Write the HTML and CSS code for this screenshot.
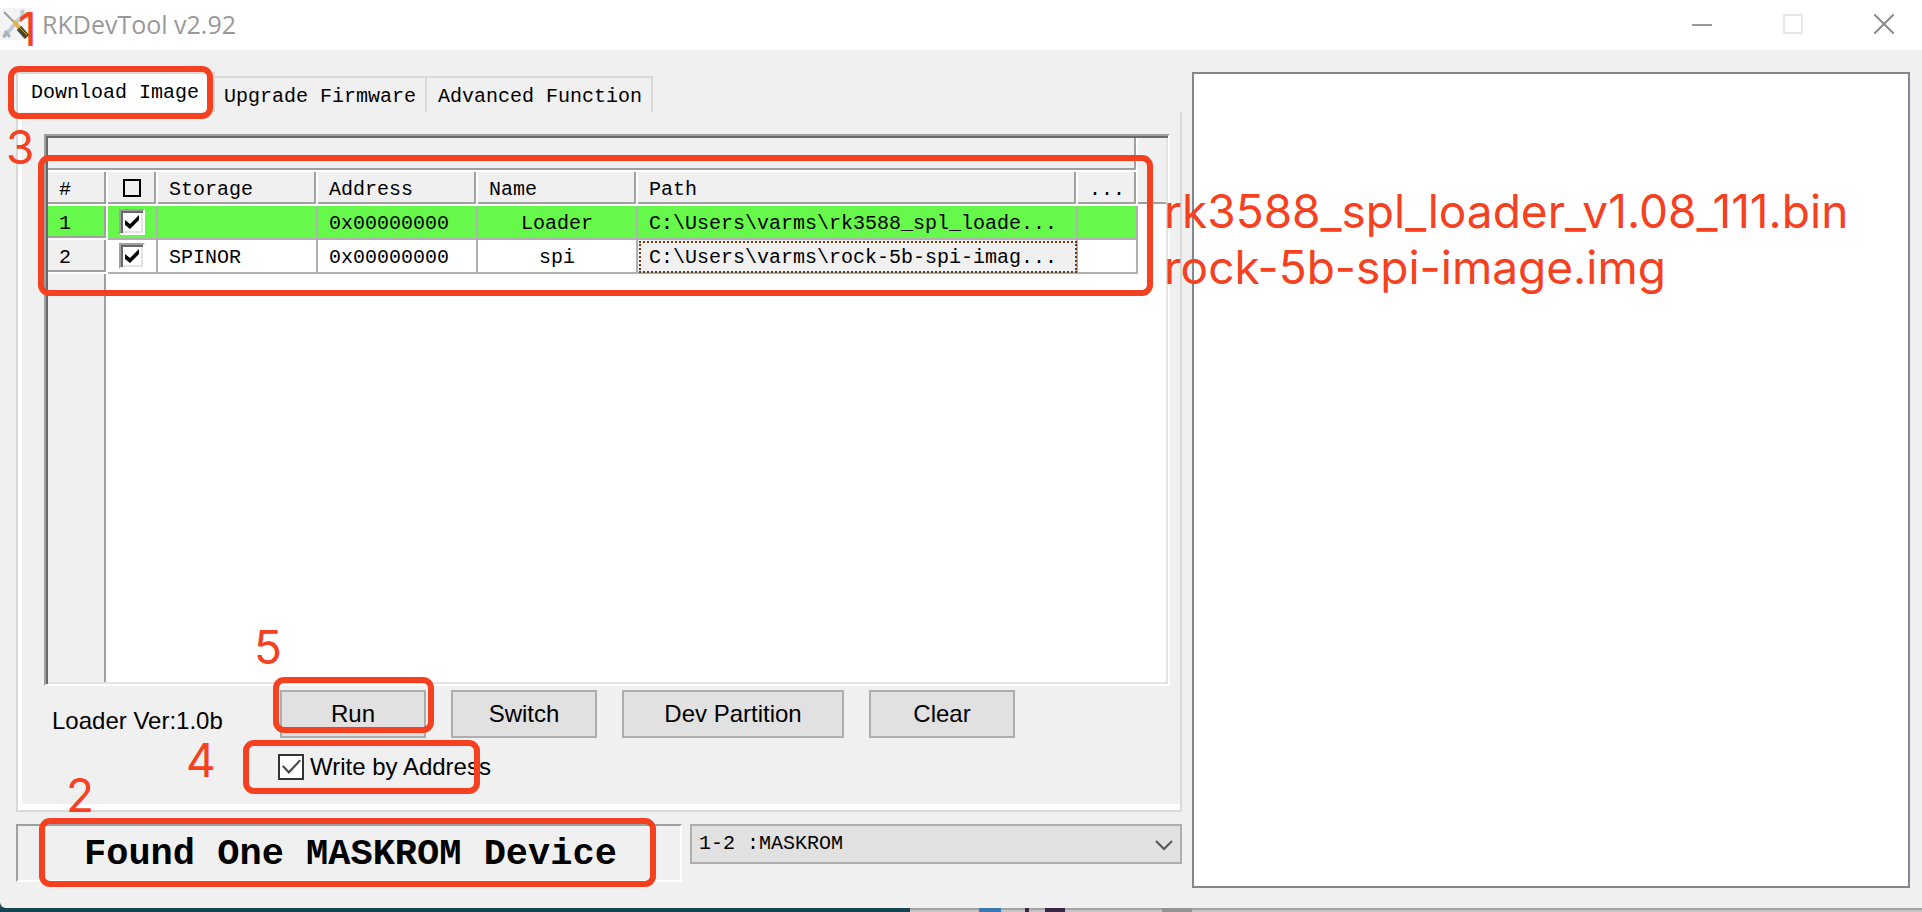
FILE: index.html
```html
<!DOCTYPE html>
<html lang="en">
<head>
  <meta charset="UTF-8" />
  <meta name="viewport" content="width=device-width, initial-scale=1" />
  <title>RKDevTool v2.92</title>
  <link rel="stylesheet" href="styles.css">
</head>
<body>

  <div class="window">
    <header class="titlebar">
      <svg class="app-icon" viewBox="0 0 32 32" aria-hidden="true">
        <rect width="32" height="32" fill="#f3f4f5" />
        <path d="M4 28 L9 23 L23 7 L22 2 M23 7 L29 9" fill="none" stroke="#c3cbd1" stroke-width="4" />
        <path d="M3 29 L8 25 M5 23 L10 29" stroke="#aab3ba" stroke-width="3" />
        <path d="M4 4 L15 15" stroke="#9b9b98" stroke-width="2" />
        <path d="M14 13 L20 21" stroke="#e0b84a" stroke-width="4" />
        <path d="M19 20 L27 29" stroke="#4b4630" stroke-width="6" />
        <path d="M20 20 L27 27" stroke="#c9a53c" stroke-width="1" />
      </svg>
      <h1>RKDevTool v2.92</h1>
      <div class="window-controls">
        <button aria-label="Minimize"><svg viewBox="0 0 20 20"><path d="M0 11H20" stroke="#999" stroke-width="2" /></svg></button>
        <button aria-label="Maximize" disabled><svg viewBox="0 0 20 20"><path d="M1 1H19V19H1Z" fill="none" stroke="#e8e8e8" stroke-width="2" /></svg></button>
        <button aria-label="Close"><svg viewBox="0 0 20 20"><path d="M0 0L20 20M20 0L0 20" stroke="#8c8c8c" stroke-width="2" /></svg></button>
      </div>
      <span class="note step-1">1</span>
    </header>

    <main class="client">
      <section class="tool">
        <nav class="tabs">
          <button class="tab active">Download Image</button>
          <button class="tab">Upgrade Firmware</button>
          <button class="tab">Advanced Function</button>
          <span class="mark mark-tab"></span>
          <span class="note step-3">3</span>
        </nav>

        <div class="panel">
          <div class="grid">
            <table>
              <colgroup>
                <col class="col-num"><col class="col-check"><col class="col-mid"><col class="col-mid"><col class="col-mid"><col><col class="col-more"><col class="col-rest">
              </colgroup>
              <thead>
                <tr>
                  <td class="band" colspan="7"></td>
                  <td class="rest" rowspan="2"></td>
                </tr>
                <tr>
                  <th>#</th>
                  <th class="check"><input type="checkbox" class="check-all" aria-label="Select all"></th>
                  <th>Storage</th>
                  <th>Address</th>
                  <th>Name</th>
                  <th>Path</th>
                  <th>...</th>
                </tr>
              </thead>
              <tbody>
                <tr class="ok">
                  <th>1</th>
                  <td class="check"><input type="checkbox" class="check-row" aria-label="Row 1" checked></td>
                  <td></td>
                  <td>0x00000000</td>
                  <td class="name">Loader</td>
                  <td>C:\Users\varms\rk3588_spl_loade...</td>
                  <td></td>
                </tr>
                <tr>
                  <th>2</th>
                  <td class="check"><input type="checkbox" class="check-row" aria-label="Row 2" checked></td>
                  <td>SPINOR</td>
                  <td>0x00000000</td>
                  <td class="name">spi</td>
                  <td class="focused">C:\Users\varms\rock-5b-spi-imag...</td>
                  <td></td>
                </tr>
              </tbody>
            </table>
            <span class="mark mark-table"></span>
          </div>

          <div class="actions">
            <span class="loader">Loader Ver:1.0b</span>
            <div class="buttons">
              <button class="btn">Run</button>
              <button class="btn">Switch</button>
              <button class="btn wide">Dev Partition</button>
              <button class="btn">Clear</button>
              <span class="mark mark-run"></span>
              <span class="note step-5">5</span>
            </div>
          </div>

          <div class="option">
            <input type="checkbox" id="byAddress" checked>
            <label for="byAddress">Write by Address</label>
            <span class="mark mark-option"></span>
            <span class="note step-4">4</span>
          </div>
        </div>

        <div class="footer">
          <div class="status">
            Found One MASKROM Device
            <span class="mark mark-status"></span>
            <span class="note step-2">2</span>
          </div>
          <div class="device">
            <select aria-label="Device">
              <option>1-2 :MASKROM</option>
            </select>
            <svg viewBox="0 0 18 12" aria-hidden="true"><path d="M1 2L9 10L17 2" fill="none" stroke="#555" stroke-width="2" /></svg>
          </div>
        </div>
      </section>

      <section class="log">
        <p class="note files">rk3588_spl_loader_v1.08_111.bin<br>rock-5b-spi-image.img</p>
      </section>
    </main>
  </div>

  <!-- sliver of the desktop under the window -->
  <div class="desktop">
    <span class="wallpaper"></span>
    <span class="taskbar"><i class="blue"></i><i class="dark"></i><i class="dark big"></i><i class="thumb"></i></span>
  </div>

</body>
</html>
```

FILE: styles.css
```css
* {
  box-sizing: border-box;
}

body {
  margin: 0;
  min-height: 100vh;
  display: flex;
  flex-direction: column;
  background: #1d4c58;
  color: #000;
  font-family: "Liberation Mono", monospace;
  font-size: 20px;
  line-height: 24px;
}

button, select {
  margin: 0;
  padding: 0;
  font: inherit;
  color: inherit;
}

.window {
  flex: 1;
  display: flex;
  flex-direction: column;
  background: #f0f0f0;
  border-bottom-left-radius: 6px;
}

/* title bar */
.titlebar {
  position: relative;
  display: flex;
  align-items: center;
  height: 50px;
  padding-bottom: 2px;
  background: #fff;
}

.app-icon {
  width: 32px;
  height: 32px;
}

.titlebar h1 {
  margin: 0 0 0 10px;
  font-family: "Open Sans", sans-serif;
  font-size: 25px;
  font-weight: 400;
  color: #999;
}

.window-controls {
  display: flex;
  gap: 71px;
  margin-left: auto;
  padding-right: 28px;
}

.window-controls button {
  display: flex;
  border: none;
  background: none;
}

.window-controls svg {
  width: 20px;
  height: 20px;
}

/* client area */
.client {
  flex: 1;
  display: grid;
  grid-template-columns: 1166fr 718fr;
  gap: 10px;
  padding: 22px 12px 20px 16px;
}

.tool {
  display: flex;
  flex-direction: column;
  min-width: 0;
}

.tabs {
  position: relative;
  display: flex;
  align-items: flex-end;
  height: 40px;
}

.tab {
  height: 36px;
  padding: 4px 9px 0;
  border: 2px solid #d9d9d9;
  border-left: none;
  border-bottom: none;
  background: #f0f0f0;
  white-space: nowrap;
}

.tab + .tab + .tab {
  padding-left: 11px;
}

.tab.active {
  height: 40px;
  padding: 0 14px 0 13px;
  border-left: 2px solid #d9d9d9;
  background: #fff;
}

.panel {
  flex: 1;
  display: flex;
  flex-direction: column;
  padding: 22px 10px 30px 26px;
  border: 2px solid #d9d9d9;
  border-top: none;
  box-shadow: inset 4px -6px 0 #fff;
}

/* partition grid */
.grid {
  position: relative;
  flex: 1;
  border: 2px solid;
  border-color: #a0a0a0 #fff #fff #a0a0a0;
  background: linear-gradient(90deg, #f0f0f0 58px, #a0a0a0 58px, #a0a0a0 60px, #fff 60px);
  box-shadow: inset 2px 2px 0 #696969, inset -2px -2px 0 #e3e3e3;
}

.grid table {
  width: calc(100% - 4px);
  margin: 2px;
  table-layout: fixed;
  border-collapse: separate;
  border-spacing: 0;
}

.col-num { width: 60px; }
.col-check { width: 50px; }
.col-mid { width: 160px; }
.col-more { width: 60px; }
.col-rest { width: 28px; }

.grid th,
.grid td {
  height: 34px;
  padding: 3px 0 0 11px;
  border-right: 2px solid #b0b0b0;
  border-bottom: 2px solid #b0b0b0;
  font-weight: 400;
  text-align: left;
  white-space: nowrap;
  overflow: hidden;
}

.grid th,
.grid .band {
  border-color: #fff;
  background: #f0f0f0;
  box-shadow: inset -2px -2px 0 #a0a0a0;
}

.grid .rest {
  border-right: none;
  border-color: #fff;
  background: #f0f0f0;
  box-shadow: inset 0 -2px 0 #a0a0a0;
}

.grid .check {
  padding: 0;
  text-align: center;
}

.grid .name {
  padding-left: 0;
  text-align: center;
}

.grid .ok th,
.grid .ok td {
  background: #66f94b;
}

.grid .focused {
  background: #f0f0f0;
  outline: 2px dotted #6b3d12;
  outline-offset: -3px;
}

input[type="checkbox"] {
  appearance: none;
  position: relative;
  display: block;
  margin: 0;
  background: #fff;
}

.grid .check-all {
  width: 18px;
  height: 18px;
  margin: 0 auto;
  border: 2px solid #000;
  background: none;
}

.grid .check-row {
  width: 26px;
  height: 26px;
  margin: 0 auto;
  border: 2px solid;
  border-color: #a0a0a0 #fff #fff #a0a0a0;
  box-shadow: inset 2px 2px 0 #696969, inset -2px -2px 0 #e3e3e3;
}

.check-row:checked::before {
  content: "";
  position: absolute;
  inset: 4px;
  background: #000;
  clip-path: polygon(0 36%, 36% 64%, 100% 0, 100% 36%, 36% 100%, 0 72%);
}

/* buttons under the grid */
.actions {
  display: flex;
  margin-top: 4px;
  font-family: "Liberation Sans", sans-serif;
  font-size: 24px;
}

.loader {
  width: 236px;
  padding: 19px 0 0 8px;
  white-space: nowrap;
}

.buttons {
  position: relative;
  display: flex;
  gap: 25px;
}

.btn {
  width: 146px;
  height: 48px;
  border: 2px solid #adadad;
  background: #e1e1e1;
}

.btn.wide {
  width: 222px;
}

.option {
  position: relative;
  display: flex;
  align-items: center;
  gap: 6px;
  align-self: flex-start;
  margin: 16px 0 0 234px;
  font-family: "Liberation Sans", sans-serif;
  font-size: 24px;
}

.option input {
  width: 26px;
  height: 26px;
  border: 2px solid #333;
}

.option input:checked::before {
  content: "";
  position: absolute;
  inset: 3px 1px 4px 2px;
  background: #444;
  clip-path: polygon(0 50%, 8% 42%, 36% 78%, 92% 4%, 100% 12%, 36% 100%);
}

/* status line */
.footer {
  display: grid;
  grid-template-columns: minmax(0, 666fr) minmax(0, 492fr);
  align-items: start;
  gap: 8px;
  margin: 12px 0 6px;
}

.status {
  position: relative;
  height: 58px;
  padding-left: 66px;
  border: 2px solid;
  border-color: #a0a0a0 #fff #fff #a0a0a0;
  font-size: 37px;
  font-weight: 700;
  line-height: 56px;
  white-space: nowrap;
}

.device {
  position: relative;
}

.device select {
  appearance: none;
  display: block;
  width: 100%;
  height: 40px;
  padding: 0 40px 0 7px;
  border: 2px solid #adadad;
  border-radius: 0;
  background: #e1e1e1;
}

.device svg {
  position: absolute;
  top: 15px;
  right: 9px;
  width: 18px;
  height: 12px;
  pointer-events: none;
}

.log {
  position: relative;
  border: 2px solid #828790;
  background: #fff;
}

/* red marks over the window */
.mark {
  position: absolute;
  z-index: 2;
  border: 6px solid #f5411f;
  border-radius: 11px;
  pointer-events: none;
}

.mark-tab {
  top: -6px;
  left: -8px;
  width: 205px;
  height: 53px;
}

.mark-table {
  top: 19px;
  left: -8px;
  right: 15px;
  height: 141px;
}

.mark-run {
  top: -13px;
  left: -7px;
  width: 161px;
  height: 56px;
}

.mark-option {
  top: -14px;
  left: -35px;
  width: 237px;
  height: 54px;
}

.mark-status {
  top: -8px;
  left: 21px;
  right: 24px;
  height: 69px;
}

.note {
  position: absolute;
  z-index: 3;
  margin: 0;
  color: #f5411f;
  font-family: Inter, sans-serif;
  font-size: 46px;
  font-weight: 400;
  line-height: 56px;
  white-space: nowrap;
}

.step-1 { top: 1px; left: 18px; }
.step-2 { top: -59px; left: 48px; }
.step-3 { top: 47px; left: -10px; }
.step-4 { top: -22px; left: -92px; }
.step-5 { top: -71px; left: -26px; }
.files { top: 109px; left: -30px; }

/* desktop strip */
.desktop {
  display: flex;
  height: 4px;
}

.wallpaper {
  flex: 910;
  background: #164552;
}

.taskbar {
  flex: 1012;
  display: flex;
  background: linear-gradient(#a4a4a4 2px, #c6c6c6 2px);
}

.taskbar i {
  height: 4px;
}

.taskbar .blue {
  width: 22px;
  margin-left: 69px;
  background: #3a78b0;
}

.taskbar .dark {
  width: 4px;
  margin-left: 24px;
  background: #3a2448;
}

.taskbar .big {
  width: 20px;
  margin-left: 16px;
}

.taskbar .thumb {
  width: 30px;
  margin-left: 97px;
  background: #929292;
}
```
